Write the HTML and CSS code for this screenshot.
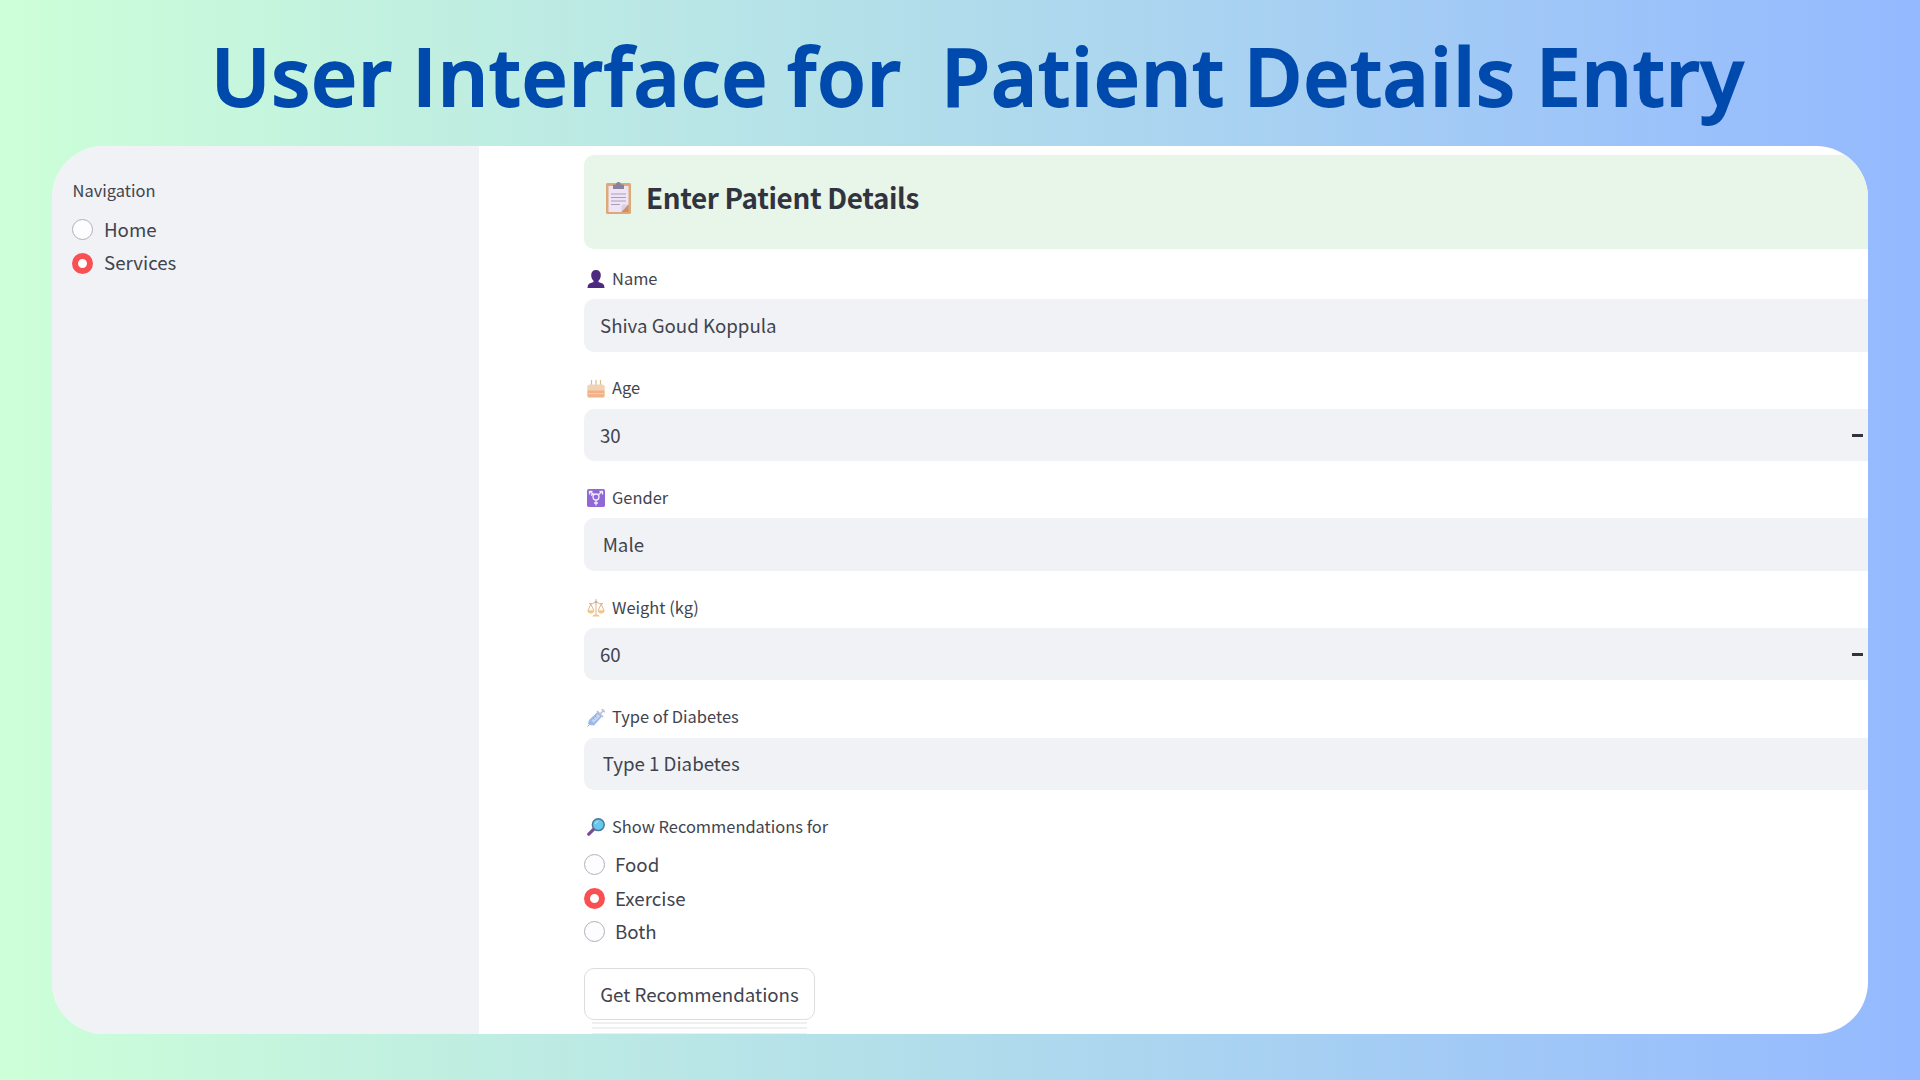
FILE: index.html
```html
<!DOCTYPE html>
<html lang="en">
<head>
<meta charset="utf-8">
<title>User Interface for Patient Details Entry</title>
<link rel="stylesheet" href="styles.css">
</head>
<body>
<h1 class="title"><span>User</span> <span>Interface</span> <span>for</span> <span class="wide">Patient</span> <span>Details</span> <span class="last">Entry</span></h1>
<div class="window">
  <aside class="sidebar">
    <div class="label nav"><span>Navigation</span></div>
    <div class="option"><i class="radio"></i><span>Home</span></div>
    <div class="option"><i class="radio on"></i><span>Services</span></div>
  </aside>
  <main class="main">
    <header class="card">
      <svg class="clipboard" viewBox="0 0 25 32">
        <rect x="0" y="1" width="25" height="31" rx="1.5" fill="#dfa878"/>
        <path d="M2.5 4h20v18.500l-7 7.500h-13z" fill="#eee4f5"/>
        <path d="M15.500 30v-6q0-1.500 1.500-1.500h5.500z" fill="#d9cfe6"/>
        <path d="M22.500 22.500V30h-7z" fill="#cf8f5f"/>
        <path d="M7 3.500q0-1 1-1h2q0-2.500 2.500-2.500T15 2.500h2q1 0 1 1V7H7z" fill="#8a829a"/>
        <path d="M5 12h15M5 15.500h15M5 19h15M5 22.500h9" stroke="#a7a0bb" stroke-width="1.200"/>
      </svg>
      <h2>Enter Patient Details</h2>
    </header>
    <section class="field">
      <div class="label"><svg class="icon" viewBox="0 0 18 18"><path d="M9 0c3.200 0 4.800 2 4.800 5 0 2.800-1 4.800-2.300 5.800v1.200l4 1.600q2 .9 2 4.400H.5q0-3.500 2-4.400l4-1.600v-1.200C5.200 9.800 4.200 7.800 4.200 5 4.200 2 5.800 0 9 0z" fill="#4b2a80"/></svg><span>Name</span></div>
      <div class="input">Shiva Goud Koppula</div>
    </section>
    <section class="field">
      <div class="label"><svg class="icon" viewBox="0 0 18 18"><path d="M4.500 0v5M9 0v5M13.500 0v5" stroke="#dcbd8e" stroke-width="1.200"/><rect x=".5" y="5" width="17" height="12" rx="1.500" fill="#f6cfa2"/><path d="M.5 10.500h17V16q0 1.500-1.500 1.500H2Q.5 17.500.5 16z" fill="#f3b088"/><path d="M.5 6.500Q.5 4.500 3 4.500h12q2.500 0 2.500 2v3q-1 1.500-2.500 0-1.500 1.500-3 0-1.500 1.500-3 0-1.500 1.500-3 0-1.500 1.500-3 0-1.500 1.500-2.500 0z" fill="#f0d2b8"/><path d="M1 13.700h16" stroke="#f8cfa0" stroke-width="1"/></svg><span>Age</span></div>
      <div class="input">30<i class="minus"></i></div>
    </section>
    <section class="field">
      <div class="label"><svg class="icon" viewBox="0 0 18 18"><rect width="18" height="18" rx="1.800" fill="#9068d6"/><g fill="none" stroke="#f2eafc" stroke-width="1.300"><circle cx="9" cy="8" r="3"/><path d="M9 11v5.500M7 14h4M6.900 5.900 3 2.500M2.500 5.500v-3h3M4 6.500l2.500-2.500M11.100 5.900 15 2.500M12.500 2.500h3v3"/></g></svg><span>Gender</span></div>
      <div class="input select">Male</div>
    </section>
    <section class="field">
      <div class="label"><svg class="icon" viewBox="0 0 18 18"><g fill="none" stroke="#dfb684" stroke-width="1"><path d="M9 0v16M2 4.500q3.500 1 7-1.500 3.500 2.500 7 1.500M3.800 5 1 11.500M3.800 5l3 6.500M14.200 5l-3 6.500M14.200 5l2.800 6.500"/></g><circle cx="9" cy="3" r="1.300" fill="#b8b2b0"/><path d="M.3 11.300h7q-.5 3.200-3.500 3.200T.3 11.300zM10.700 11.300h7q-.5 3.200-3.500 3.200t-3.500-3.200zM5.500 17.500q0-2 3.500-2t3.500 2z" fill="#f1c58c"/></svg><span>Weight (kg)</span></div>
      <div class="input">60<i class="minus"></i></div>
    </section>
    <section class="field">
      <div class="label"><svg class="icon" viewBox="0 0 18 18"><path d="M.5 17.500 3 15" stroke="#8d9cc4" stroke-width="1"/><path d="M2 11 11 2.500l4.500 4.500-8.500 9.500-4.500-.5L1 14.500z" fill="#9cb9e8"/><path d="m4.500 11.500 6.500-6.500 2.200 2.200-6.500 6.500z" fill="#c4d8f5"/><path d="m10 2 6 6M13 5l3.500-3.500M14.800 0l3.200 3.200" stroke="#b9c1da" stroke-width="1.700"/><path d="m6 9 1.500 1.500M8 7l1.500 1.500" stroke="#7092cc" stroke-width=".8"/></svg><span>Type of Diabetes</span></div>
      <div class="input select">Type 1 Diabetes</div>
    </section>
    <section class="choices">
      <div class="label"><svg class="icon" viewBox="0 0 18 18"><path d="m1.800 16.200 5-5" stroke="#7d4b92" stroke-width="3.300" stroke-linecap="round"/><circle cx="11.300" cy="6.700" r="5.900" fill="#65c8ec" stroke="#4d7693" stroke-width="1.500"/><path d="M8 6q.8-2.500 3.300-2.700" fill="none" stroke="#a6e4f8" stroke-width="1.200"/></svg><span>Show Recommendations for</span></div>
      <div class="group">
        <div class="option"><i class="radio"></i><span>Food</span></div>
        <div class="option"><i class="radio on"></i><span>Exercise</span></div>
        <div class="option"><i class="radio"></i><span>Both</span></div>
      </div>
    </section>
    <button class="button">Get Recommendations</button>
    <div class="echo"></div>
  </main>
</div>
</body>
</html>
```
FILE: styles.css
```css
* { box-sizing: border-box; }
body {
  margin: 0;
  width: 1920px;
  height: 1080px;
  overflow: hidden;
  background: linear-gradient(90deg, #cdffd8, #94b9ff);
  font-family: "Noto Sans CJK SC", "Noto Sans", sans-serif;
  font-size: 18.700px;
  color: #41444e;
}
.title {
  margin: 0;
  height: 146px;
  padding: 20px 0 0 211px;
  font: 600 80px/110px "Open Sans", "Noto Sans", sans-serif;
  letter-spacing: .8px;
  word-spacing: -2.500px;
  -webkit-text-stroke: 1.800px #004aad;
  color: #004aad;
  white-space: nowrap;
}
.wide { margin-left: 20px; }
.last { margin-left: 1px; }
.window {
  display: flex;
  width: 1816px;
  height: 888px;
  margin-left: 52px;
  border-radius: 52px;
  overflow: hidden;
  background: #fff;
}
.sidebar {
  width: 427px;
  flex: none;
  padding: 29px 0 0 20px;
  background: #f0f2f6;
}
.main { flex: 1; padding: 8.500px 0 0 105px; }
.label {
  display: flex;
  align-items: center;
  height: 32px;
  font-size: 16.450px;
  line-height: 30px;
}
.label span { position: relative; top: -1.300px; }
.nav { margin-bottom: 6px; padding-left: .5px; }
.icon { width: 18px; height: 18px; margin: 0 7px 0 3px; }
.option { display: flex; align-items: center; gap: 11px; height: 33.500px; line-height: 33px; }
.option span { position: relative; top: -1.300px; }
.group .option { gap: 10px; }
.radio {
  width: 21px;
  height: 21px;
  border-radius: 50%;
  border: 1px solid #b0b1b8;
  border-bottom-width: 1.500px;
  background: #fdfdff;
}
.radio.on { border: 6.500px solid #f95054; background: #fff; }
.card {
  display: flex;
  height: 94.500px;
  margin-bottom: 14.200px;
  padding: 27px 0 0 22px;
  border-radius: 10px 0 0 10px;
  background: #e8f5e9;
}
.clipboard { width: 25px; height: 32px; margin-right: 15px; }
h2 { margin: -1.500px 0 0; font-size: 27.800px; letter-spacing: -.35px; line-height: 34px; font-weight: 600; color: #31333f; }
.field { margin-bottom: 21.200px; }
.input {
  display: flex;
  align-items: center;
  justify-content: space-between;
  height: 52.400px;
  margin-top: 4px;
  padding: 0 5px 1.800px 16px;
  border-radius: 10px 0 0 10px;
  background: #f0f2f6;
}
.select { padding-left: 18.700px; }
.minus { width: 11px; height: 3px; margin-top: 2px; background: #31333f; }
.group { margin-top: 5px; }
.button {
  display: block;
  width: 231px;
  height: 52.500px;
  margin-top: 19.300px;
  padding: 0 0 1.500px;
  border: 1.500px solid #dcdde0;
  border-radius: 10px;
  background: #fff;
  font: inherit;
  color: inherit;
  white-space: nowrap;
}
.echo {
  width: 215px;
  height: 13px;
  margin: 1.500px 0 0 8px;
  background: repeating-linear-gradient(#efefef 0 2px, #fff 2px 5.500px);
}
```
